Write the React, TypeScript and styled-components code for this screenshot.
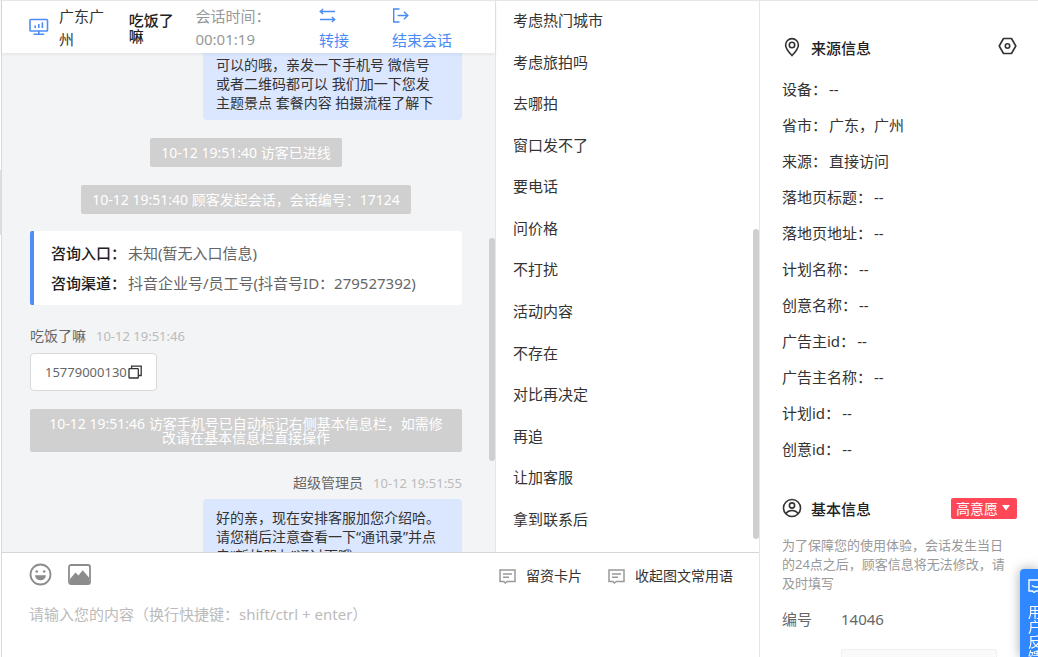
import React from "react";
import styled, { createGlobalStyle } from "styled-components";

const GlobalStyle = createGlobalStyle`
  *, *::before, *::after { box-sizing: border-box; }
  body {
    margin: 0;
    overflow: hidden;
    background: #fff;
    color: #333;
    font-family: "Noto Sans", "Noto Sans CJK SC", sans-serif;
    font-size: 15px;
    font-weight: 400;
  }
  button, textarea { font: inherit; color: inherit; }
  button { padding: 0; border: 0; background: none; cursor: pointer; }
  h2, p, ul, dl, dd { margin: 0; padding: 0; }
  svg { display: block; flex: none; }
`;

const Shell = styled.div`
  display: grid;
  grid-template-columns: minmax(0, 1fr) 278px;
  height: 100vh;
  border-top: 1px solid #e6e6e6;
  overflow: hidden;
`;

const Workspace = styled.main`
  position: relative;
  display: flex;
  flex-direction: column;
  min-height: 0;
  margin-left: 1px;
  border-left: 1px solid #d9dadc;
  border-right: 1px solid #e6e6e6;
`;

const Panes = styled.div`
  flex: 1;
  min-height: 0;
  display: grid;
  grid-template-columns: minmax(0, 1fr) 264px;
`;

const Chat = styled.section`
  position: relative;
  display: flex;
  flex-direction: column;
  min-height: 0;
  background: #f3f4f6;
`;

const ChatHeader = styled.header`
  flex: none;
  z-index: 1;
  display: flex;
  align-items: center;
  height: 52px;
  padding-left: 27px;
  background: #fff;
  box-shadow: 0 1px 4px rgba(0, 0, 0, 0.08);
`;

const Place = styled.span`
  width: 47px;
  margin: 0 23px 0 10px;
  padding-top: 2px;
  line-height: 23px;
`;

const Visitor = styled.strong`
  width: 47px;
  margin-right: 20px;
  padding-top: 2px;
  color: #222;
  font-weight: 500;
  line-height: 16px;
`;

const Elapsed = styled.span`
  width: 80px;
  margin-right: 44px;
  padding-top: 2px;
  color: #999;
  line-height: 23px;
`;

const HeaderAction = styled.button`
  display: flex;
  flex-direction: column;
  gap: 6px;
  margin-right: 43px;
  padding-top: 4px;
  color: #4a8af4;
  line-height: 22px;
  white-space: nowrap;
`;

const Thread = styled.div`
  flex: 1;
  min-height: 0;
  overflow: hidden;
  padding: 0 33px 0 28px;
  display: flex;
  flex-direction: column;
  align-items: center;
  > * { flex: none; }
`;

const Bubble = styled.p<{ $continued?: boolean }>`
  align-self: flex-end;
  width: 259px;
  margin-top: ${(p) => (p.$continued ? "0" : "6px")};
  padding: ${(p) => (p.$continued ? "2px 13px 8px" : "9px 13px")};
  border-radius: ${(p) => (p.$continued ? "0 0 4px 4px" : "4px")};
  background: #dbe7ff;
  font-size: 14px;
  line-height: 19px;
  white-space: nowrap;
`;

const Notice = styled.p<{ $wide?: boolean }>`
  margin-top: 18px;
  padding: 8px ${(p) => (p.$wide ? "17px" : "11px")} 7px;
  border-radius: 2px;
  background: #d0d0d0;
  color: #fff;
  font-size: 14px;
  line-height: 14px;
  text-align: center;
`;

const EntryCard = styled.dl`
  align-self: stretch;
  margin-top: 17px;
  padding: 7px 17px;
  border-left: 4px solid #4e8df7;
  border-radius: 2px;
  background: #fff;
`;

const EntryRow = styled.div`
  display: flex;
  line-height: 30px;
  color: #666;
  white-space: nowrap;
  dt { color: #222; font-weight: 500; width: 77px; }
`;

const Sender = styled.div<{ $own?: boolean }>`
  align-self: ${(p) => (p.$own ? "flex-end" : "flex-start")};
  display: flex;
  gap: 10px;
  margin-top: 21px;
  color: #666;
  font-size: 14px;
  line-height: 20px;
  time { color: #bbb; font-size: 13px; }
`;

const PhoneMessage = styled.div`
  align-self: flex-start;
  display: flex;
  align-items: center;
  gap: 1px;
  height: 38px;
  margin-top: 7px;
  padding: 0 14px;
  border: 1px solid #d9dadc;
  border-radius: 4px;
  background: #fff;
  color: #666;
  font-size: 13px;
`;

const ScrollThumb = styled.span<{ $top: string; $bottom: string }>`
  position: absolute;
  right: 0;
  top: ${(p) => p.$top};
  bottom: ${(p) => p.$bottom};
  width: 6px;
  border-radius: 3px;
  background: #cfcfcf;
`;

const Replies = styled.section`
  position: relative;
  min-height: 0;
  border-left: 1px solid #e6e6e6;
`;

const ReplyList = styled.ul`
  display: flex;
  flex-direction: column;
  height: 100%;
  padding-bottom: 11px;
  list-style: none;
  li { flex: 1; display: flex; }
`;

const Reply = styled.button`
  flex: 1;
  padding: 0 0 4px 17px;
  text-align: left;
`;

const Composer = styled.section`
  flex: none;
  height: 105px;
  border-top: 1px solid #d6d6d6;
`;

const Tools = styled.div`
  display: flex;
  align-items: center;
  height: 46px;
  padding: 0 26px 4px 27px;
`;

const IconButton = styled.button`
  margin-right: 16px;
  color: #8c8c8c;
`;

const TextTool = styled.button<{ $first?: boolean }>`
  display: flex;
  align-items: center;
  gap: 10px;
  margin-left: ${(p) => (p.$first ? "auto" : "26px")};
  padding-top: 4px;
  font-size: 14px;
  line-height: 20px;
  svg { color: #999; }
`;

const Draft = styled.textarea`
  display: block;
  width: 100%;
  height: 50px;
  padding: 4px 27px;
  border: 0;
  outline: 0;
  resize: none;
  background: none;
  line-height: 22px;
  &::placeholder { color: #bbb; opacity: 1; }
`;

const Aside = styled.aside`
  min-height: 0;
  overflow: hidden;
  padding: 31px 21px 0 22px;
`;

const SectionHead = styled.header<{ $second?: boolean }>`
  display: flex;
  align-items: center;
  gap: 9px;
  height: 30px;
  margin-top: ${(p) => (p.$second ? "26px" : "0")};
  h2 {
    flex: 1;
    color: #222;
    font-size: 15px;
    font-weight: 500;
  }
`;

const SettingsButton = styled.button`
  padding-bottom: 2px;
`;

const Facts = styled.dl`
  margin-top: 9px;
  line-height: 36px;
  > div { display: flex; gap: 2px; }
`;

const IntentTag = styled.button`
  display: flex;
  align-items: center;
  gap: 4px;
  height: 21px;
  padding: 0 7px 0 5px;
  border-radius: 2px;
  background: #ff4757;
  color: #fff;
  font-size: 14px;
`;

const Hint = styled.p`
  margin-top: 13px;
  color: #999;
  font-size: 13px;
  line-height: 19px;
  white-space: nowrap;
`;

const Field = styled.div`
  display: grid;
  grid-template-columns: 59px 1fr;
  margin-top: 15px;
  color: #666;
  line-height: 22px;
`;

const FieldBox = styled.input`
  display: block;
  width: 156px;
  height: 32px;
  margin: 19px 0 0 59px;
  border: 1px solid #f0f0f0;
  border-radius: 2px;
  background: #fafafa;
`;

const Feedback = styled.button`
  position: fixed;
  right: 0;
  bottom: 0;
  width: 18px;
  height: 88px;
  padding: 10px 0 0 8px;
  overflow: hidden;
  border-radius: 4px 0 0 0;
  background: #2f88ff;
  box-shadow: 0 0 12px rgba(0, 0, 0, 0.35);
  color: #fff;
  display: flex;
  flex-direction: column;
  align-items: flex-start;
  font-size: 14px;
  line-height: 15px;
  text-align: left;
  span { display: block; width: 14px; margin-top: 11px; }
`;

const EdgeHandle = styled.span`
  position: absolute;
  left: -2px;
  top: 169px;
  width: 1px;
  height: 65px;
  background: #dedede;
`;

const MonitorIcon = () => (
  <svg width="20" height="18" viewBox="0 0 20 18" fill="none" stroke="#4e8df7" strokeWidth="1.6">
    <rect x="1" y="1.5" width="17.5" height="11.5" rx="0.8" />
    <path d="M6.2 10V7.5M9.8 10V6M13.4 10V4.2M9.8 13v3M4.5 16.2h10.7" />
  </svg>
);

const TransferIcon = () => (
  <svg width="17" height="15" viewBox="0 0 17 15" fill="none" stroke="currentColor" strokeWidth="1.3">
    <path d="M16 3.5H1.2M4.2 1l-3 2.500 3 2.500M1 11.5h14.8M12.8 9l3 2.500-3 2.500" />
  </svg>
);

const LeaveIcon = () => (
  <svg width="17" height="15" viewBox="0 0 17 15" fill="none" stroke="currentColor" strokeWidth="1.4">
    <path d="M7.500 1H1.7v13H7.500M5.500 7.5h10.300M12 3.7l3.8 3.8-3.8 3.8" />
  </svg>
);

const CopyIcon = () => (
  <svg width="14" height="14" viewBox="0 0 14 14" fill="none" stroke="#333" strokeWidth="1.3">
    <rect x="1" y="3.6" width="9.3" height="9.4" rx="0.6" />
    <path d="M3.6 3.6V1.1h9.6v9.4h-2.8" />
  </svg>
);

const SmileIcon = () => (
  <svg width="23" height="23" viewBox="0 0 23 23" fill="none">
    <circle cx="11.5" cy="11.5" r="10" stroke="currentColor" strokeWidth="1.8" />
    <circle cx="7.8" cy="8.5" r="1.3" fill="currentColor" />
    <circle cx="15.2" cy="8.5" r="1.3" fill="currentColor" />
    <path d="M6 12.3h11c-.3 3.2-2.6 5-5.5 5s-5.200-1.800-5.500-5z" fill="currentColor" />
  </svg>
);

const PictureIcon = () => (
  <svg width="23" height="21" viewBox="0 0 23 21" fill="none">
    <rect x="1" y="1" width="21" height="19" rx="2" stroke="currentColor" strokeWidth="1.8" />
    <path d="M2 15l5.500-6.500 3 3 4.200-5.200L21 13.500V19H2z" fill="currentColor" />
  </svg>
);

const NoteIcon = () => (
  <svg width="17" height="15" viewBox="0 0 17 15" fill="none" stroke="currentColor" strokeWidth="1.5">
    <path d="M1 1h15v11.500H8.300L6.300 14l-1.500-1.500H1zM4 5h9M4 8.300h6" />
  </svg>
);

const PinIcon = () => (
  <svg width="20" height="20" viewBox="0 0 20 20" fill="none" stroke="#333" strokeWidth="1.6">
    <path d="M10 18.500C6.500 15 3.600 11.800 3.600 8a6.400 6.400 0 0 1 12.800 0c0 3.800-2.900 7-6.400 10.500z" />
    <circle cx="10" cy="8" r="2.700" />
  </svg>
);

const HexIcon = () => (
  <svg width="19" height="18" viewBox="0 0 19 18" fill="none" stroke="#333" strokeWidth="1.6" strokeLinejoin="round">
    <path d="M5.500 1.500h8L17.800 9l-4.300 7.500h-8L1.200 9z" />
    <circle cx="9.500" cy="9" r="2.200" />
  </svg>
);

const PersonIcon = () => (
  <svg width="20" height="20" viewBox="0 0 20 20" fill="none" stroke="#333" strokeWidth="1.6">
    <circle cx="10" cy="10" r="8.500" />
    <circle cx="10" cy="7.500" r="2.600" />
    <path d="M3.900 15.500c1.300-2 3.500-3 6.100-3s4.800 1 6.100 3" />
  </svg>
);

const CaretIcon = () => (
  <svg width="8" height="6" viewBox="0 0 8 6" fill="currentColor">
    <path d="M0 0h8L4 5.500z" />
  </svg>
);

const FeedbackIcon = () => (
  <svg width="16" height="14" viewBox="0 0 16 14" fill="none" stroke="currentColor" strokeWidth="1.400">
    <path d="M1 1h14v11H8l-2 1.500L4.500 12H1zM4 6.500c2 2 6 2 8 0" />
  </svg>
);

const replies = [
  "考虑热门城市", "考虑旅拍吗", "去哪拍", "窗口发不了", "要电话", "问价格", "不打扰",
  "活动内容", "不存在", "对比再决定", "再追", "让加客服", "拿到联系后",
];

const facts = [
  ["设备", "--"], ["省市", "广东，广州"], ["来源", "直接访问"], ["落地页标题", "--"],
  ["落地页地址", "--"], ["计划名称", "--"], ["创意名称", "--"], ["广告主id", "--"],
  ["广告主名称", "--"], ["计划id", "--"], ["创意id", "--"],
];

export default function App() {
  return (
    <>
      <GlobalStyle />
      <Shell lang="zh-CN">
        <Workspace>
          <EdgeHandle />
          <Panes>
            <Chat>
              <ChatHeader>
                <MonitorIcon />
                <Place>广东广州</Place>
                <Visitor>吃饭了嘛</Visitor>
                <Elapsed>会话时间：<br />00:01:19</Elapsed>
                <HeaderAction type="button"><TransferIcon />转接</HeaderAction>
                <HeaderAction type="button"><LeaveIcon />结束会话</HeaderAction>
              </ChatHeader>
              <Thread>
                <Bubble $continued>
                  可以的哦，亲发一下手机号 微信号<br />
                  或者二维码都可以 我们加一下您发<br />
                  主题景点 套餐内容 拍摄流程了解下
                </Bubble>
                <Notice>10-12 19:51:40 访客已进线</Notice>
                <Notice>10-12 19:51:40 顾客发起会话，会话编号：17124</Notice>
                <EntryCard>
                  <EntryRow><dt>咨询入口：</dt><dd>未知(暂无入口信息)</dd></EntryRow>
                  <EntryRow><dt>咨询渠道：</dt><dd>抖音企业号/员工号(抖音号ID：279527392)</dd></EntryRow>
                </EntryCard>
                <Sender><span>吃饭了嘛</span><time>10-12 19:51:46</time></Sender>
                <PhoneMessage>
                  15779000130
                  <button type="button" aria-label="复制"><CopyIcon /></button>
                </PhoneMessage>
                <Notice $wide>
                  10-12 19:51:46 访客手机号已自动标记右侧基本信息栏，如需修改请在基本信息栏直接操作
                </Notice>
                <Sender $own><span>超级管理员</span><time>10-12 19:51:55</time></Sender>
                <Bubble>
                  好的亲，现在安排客服加您介绍哈。<br />
                  请您稍后注意查看一下“通讯录”并点<br />
                  击“新的朋友”通过下哦
                </Bubble>
              </Thread>
              <ScrollThumb $top="43%" $bottom="91px" />
            </Chat>
            <Replies>
              <ReplyList>
                {replies.map((text) => (
                  <li key={text}><Reply type="button">{text}</Reply></li>
                ))}
              </ReplyList>
              <ScrollThumb $top="228px" $bottom="13px" />
            </Replies>
          </Panes>
          <Composer>
            <Tools>
              <IconButton type="button" aria-label="表情"><SmileIcon /></IconButton>
              <IconButton type="button" aria-label="图片"><PictureIcon /></IconButton>
              <TextTool type="button" $first><NoteIcon />留资卡片</TextTool>
              <TextTool type="button"><NoteIcon />收起图文常用语</TextTool>
            </Tools>
            <Draft aria-label="消息" placeholder="请输入您的内容（换行快捷键：shift/ctrl + enter）" />
          </Composer>
        </Workspace>
        <Aside>
          <SectionHead>
            <PinIcon />
            <h2>来源信息</h2>
            <SettingsButton type="button" aria-label="设置"><HexIcon /></SettingsButton>
          </SectionHead>
          <Facts>
            {facts.map(([name, value]) => (
              <div key={name}><dt>{name}：</dt><dd>{value}</dd></div>
            ))}
          </Facts>
          <SectionHead $second>
            <PersonIcon />
            <h2>基本信息</h2>
            <IntentTag type="button">高意愿<CaretIcon /></IntentTag>
          </SectionHead>
          <Hint>
            为了保障您的使用体验，会话发生当日<br />
            的24点之后，顾客信息将无法修改，请<br />
            及时填写
          </Hint>
          <Field><span>编号</span><span>14046</span></Field>
          <FieldBox aria-label="姓名" />
        </Aside>
      </Shell>
      <Feedback type="button">
        <FeedbackIcon />
        <span>用户反馈</span>
      </Feedback>
    </>
  );
}
